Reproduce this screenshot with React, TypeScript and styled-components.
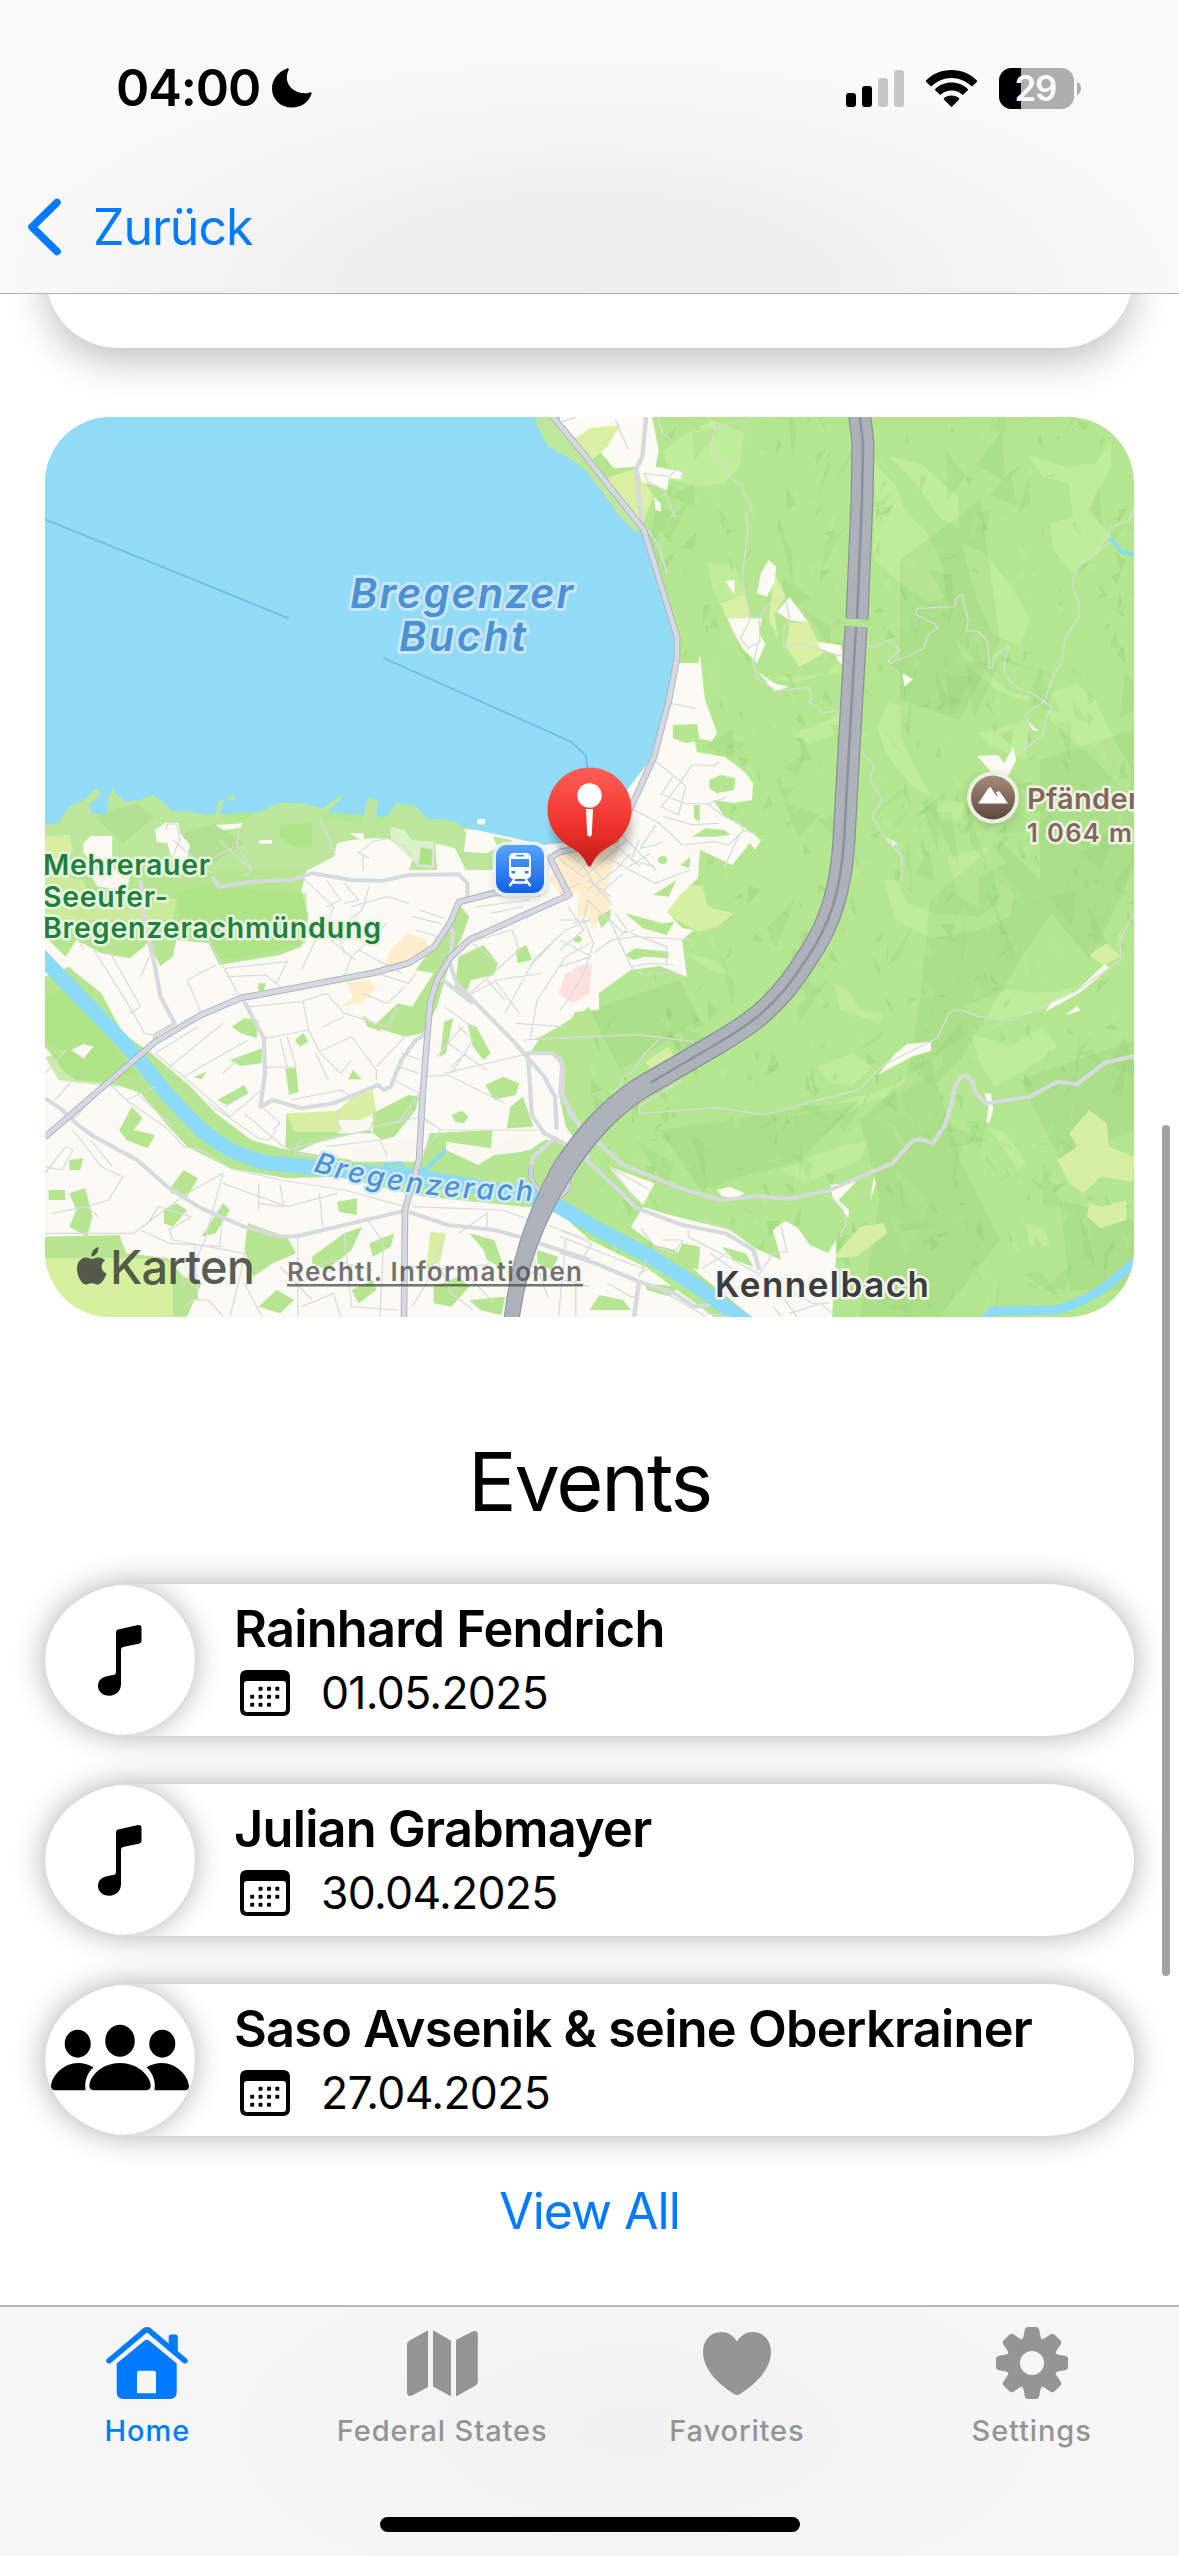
import React from "react";
import styled, { createGlobalStyle } from "styled-components";

const GlobalStyle = createGlobalStyle`
  * { box-sizing: border-box; }
  html, body { margin: 0; padding: 0; background: #fff; }
  body { font-family: Inter, "Liberation Sans", sans-serif; -webkit-font-smoothing: antialiased; }
  h2, p { margin: 0; }
`;

const Screen = styled.div`
  position: relative;
  width: 1179px;
  height: 2556px;
  display: flex;
  flex-direction: column;
  overflow: hidden;
  background: #fefefe;
  color: #000;
`;

const Header = styled.header`
  height: 294px;
  display: flex;
  flex-direction: column;
  border-bottom: 1px solid #b2b2b2;
  background: radial-gradient(ellipse 600px 240px at 50% 100%, #eeeeee 0%, #efefef 35%, #f5f5f5 75%, #f9f9f9 100%);
`;

const StatusBar = styled.div`
  height: 176px;
  padding: 0 98px 0 116px;
  display: flex;
  align-items: center;
  justify-content: space-between;
`;

const StatusGroup = styled.div<{ $gap: number }>`
  display: flex;
  align-items: center;
  gap: ${(p) => p.$gap}px;
`;

const Clock = styled.span`
  font-size: 50.5px;
  font-weight: 600;
  line-height: 60px;
  letter-spacing: -1.1px;
`;

const BackButton = styled.a`
  height: 102px;
  padding-left: 27px;
  display: flex;
  align-items: center;
  gap: 31px;
  color: #007aff;
  font-size: 50px;
  letter-spacing: -1px;
  line-height: 60px;
`;

const Content = styled.main`
  flex: 1;
  min-height: 0;
  overflow: hidden;
  padding: 0 45px;
  display: flex;
  flex-direction: column;
`;

const PeekCard = styled.section`
  flex: none;
  height: 254px;
  margin: -200px 1px 69px;
  border-radius: 72px;
  background: #fff;
  box-shadow: 0 14px 36px rgba(0, 0, 0, 0.23);
`;

const MapCard = styled.section`
  flex: none;
  height: 900px;
  border-radius: 66px;
  overflow: hidden;
  svg { display: block; }
`;

const SectionTitle = styled.h2`
  height: 267px;
  padding-top: 116px;
  text-align: center;
  font-size: 81px;
  line-height: 98px;
  font-weight: 400;
  letter-spacing: -2.2px;
  flex: none;
`;

const EventList = styled.div`
  display: flex;
  flex-direction: column;
  gap: 48px;
`;

const EventCard = styled.article`
  height: 152px;
  display: flex;
  align-items: center;
  gap: 39px;
  border-radius: 88px / 76px;
  overflow: hidden;
  background: #fff;
  box-shadow: 0 0 30px rgba(0, 0, 0, 0.33);
`;

const Disc = styled.div`
  flex: none;
  width: 150px;
  height: 150px;
  border-radius: 50%;
  background: #fff;
  box-shadow: 0 0 28px rgba(0, 0, 0, 0.31);
  svg { display: block; }
`;

const EventText = styled.div`
  display: flex;
  flex-direction: column;
  gap: 2px;
  padding-top: 2px;
`;

const EventName = styled.p`
  font-size: 50.5px;
  line-height: 62px;
  font-weight: 600;
  letter-spacing: -0.75px;
  white-space: nowrap;
`;

const EventDate = styled.p`
  display: flex;
  align-items: center;
  gap: 31px;
  padding-left: 6px;
  font-size: 44.5px;
  line-height: 62px;
  letter-spacing: -0.7px;
`;

const ViewAll = styled.a`
  margin-top: 44px;
  text-align: center;
  color: #007aff;
  font-size: 50px;
  line-height: 62px;
  letter-spacing: -1px;
`;

const ScrollThumb = styled.div`
  position: absolute;
  right: 9px;
  top: 1125px;
  width: 8px;
  height: 851px;
  border-radius: 4px;
  background: #a2a2a2;
`;

const TabBar = styled.nav`
  height: 251px;
  border-top: 2px solid #b9b9b9;
  background: radial-gradient(ellipse 420px 180px at 54% 50%, #f1f1f1 0%, #f3f3f3 50%, #f6f6f6 100%);
  display: flex;
  flex-direction: column;
  align-items: center;
  justify-content: space-between;
  padding-bottom: 24px;
`;

const Tabs = styled.div`
  width: 100%;
  display: flex;
`;

const Tab = styled.a<{ $active?: boolean }>`
  flex: 1;
  display: flex;
  flex-direction: column;
  align-items: center;
  color: ${(p) => (p.$active ? "#007aff" : "#949494")};
  font-size: 29px;
  line-height: 36px;
  font-weight: 500;
  letter-spacing: 0.9px;
`;

const TabIcon = styled.span`
  height: 106px;
  display: flex;
  align-items: center;
  svg { display: block; margin-top: 6px; }
`;

const HomeIndicator = styled.div`
  width: 420px;
  height: 15px;
  border-radius: 8px;
  background: #000;
`;

/* ---------- icons ---------- */

const MoonIcon = () => (
  <svg width="40" height="40" viewBox="0 0 40 40">
    <path d="M15 0.5C6 4 0 11.500 0 20.500C0 31.500 8.500 39.500 20 39.500C29 39.500 36.500 34.500 39.500 26C39.800 24.800 39 24 37.600 24.500C34.500 25.600 31 25.600 27.500 24.600C17 21.500 12 12 16.600 2.300C17.200 0.800 16.500 0 15 0.500Z" />
  </svg>
);

const SignalIcon = () => (
  <svg width="58" height="37" viewBox="0 0 58 37">
    <rect x="0" y="23" width="10" height="14" rx="3" />
    <rect x="16" y="16" width="10" height="21" rx="3" />
    <rect x="32" y="8" width="10" height="29" rx="3" fill="#c6c6c6" />
    <rect x="48" y="0" width="10" height="37" rx="3" fill="#c6c6c6" />
  </svg>
);

const WifiIcon = () => (
  <svg width="51" height="37" viewBox="0 0 51 37">
    <path d="M25.500 0C35.500 0 44.500 4 51 10.500C51.300 10.900 51.300 11.300 51 11.700L46.500 16C46.200 16.300 45.700 16.300 45.300 16C40 11 33 8 25.500 8C18 8 11 11 5.700 16C5.300 16.300 4.800 16.300 4.500 16L0 11.700C-0.300 11.300 -0.300 10.900 0 10.500C6.500 4 15.500 0 25.500 0Z" />
    <path d="M25.500 12.600C31.800 12.600 37.500 15 41.800 19C42.200 19.400 42.200 19.800 41.800 20.200L37.300 24.600C37 24.900 36.500 24.900 36.100 24.600C33.300 22 29.600 20.500 25.500 20.500C21.400 20.500 17.700 22 14.900 24.600C14.500 24.900 14 24.900 13.700 24.600L9.200 20.200C8.800 19.800 8.800 19.400 9.200 19C13.500 15 19.200 12.600 25.500 12.600Z" />
    <path d="M25.500 25.500C28.500 25.500 31 26.400 32.900 28C33.400 28.500 33.400 28.900 33 29.400L26.200 36.500C25.800 37 25.200 37 24.800 36.500L18 29.400C17.600 28.900 17.600 28.500 18.100 28C20 26.400 22.500 25.500 25.500 25.500Z" />
  </svg>
);

const BatteryIcon = () => (
  <svg width="82" height="41" viewBox="0 0 82 41">
    <defs>
      <clipPath id="cell"><rect width="75" height="41" rx="12.500" /></clipPath>
    </defs>
    <g clipPath="url(#cell)">
      <rect width="75" height="41" fill="#adadad" />
      <rect width="22" height="41" fill="#000" />
    </g>
    <path d="M78 14C80.500 15 82 17.500 82 20.500C82 23.500 80.500 26 78 27Z" fill="#adadad" />
    <text x="37" y="33" textAnchor="middle" fontSize="35" fontWeight="600" fill="#fafafa" textLength="43">29</text>
  </svg>
);

const ChevronIcon = () => (
  <svg width="35" height="58" viewBox="0 0 35 58">
    <path d="M30 4.500L5 29L30 53.500" fill="none" stroke="#007aff" strokeWidth="7.500" strokeLinecap="round" strokeLinejoin="round" />
  </svg>
);

const NoteIcon = () => (
  <svg width="150" height="150" viewBox="0 0 150 150">
    <path d="M71 47Q71 45 73 44.500L93 40Q96.500 39.500 96.500 43V56Q96.500 58 94 58.700L79 61.700Q76 62.300 76 65V99C76 106 71 110.700 64.500 110.700C57 110.700 53 106 53 101C53 95 57 92 63 91L68 90Q71 89.500 71 87Z" />
  </svg>
);

const PeopleIcon = () => (
  <svg width="150" height="150" viewBox="0 0 150 150">
    <ellipse cx="32.700" cy="58.700" rx="13" ry="14" />
    <ellipse cx="75" cy="55.700" rx="14.800" ry="16" />
    <ellipse cx="117.300" cy="58.700" rx="13" ry="14" />
    <path d="M10 105.300Q6 105.300 6 101C7 90 19 78 33 78C39 78 44 79.500 48.500 82.500C43 87 39 95 40.500 105.300Z" />
    <path d="M140 105.300Q144 105.300 144 101C143 90 131 78 117 78C111 78 106 79.500 101.500 82.500C107 87 111 95 109.500 105.300Z" />
    <path d="M49 105.300Q44.300 105.300 44.300 100.500C45 90 58 78 75 78C92 78 105 90 105.700 100.500Q105.700 105.300 101 105.300Z" />
  </svg>
);

const calendarDots = [
  [20.5, 18.7], [29, 18.7], [37.3, 18.7],
  [12.2, 26.8], [20.5, 26.8], [29, 26.8], [37.3, 26.8],
  [12.2, 34.8], [20.5, 34.8], [29, 34.8],
];

const CalendarIcon = () => (
  <svg width="50" height="46" viewBox="0 0 50 46">
    <path fillRule="evenodd" d="M7 0H43Q50 0 50 7V39Q50 46 43 46H7Q0 46 0 39V7Q0 0 7 0ZM7 11Q4 11 4 14V39Q4 42 7 42H43Q46 42 46 39V14Q46 11 43 11Z" />
    {calendarDots.map(([x, y]) => (
      <rect key={`${x}-${y}`} x={x - 2} y={y - 2} width="4" height="4" rx="1" />
    ))}
  </svg>
);

const HouseIcon = () => (
  <svg width="82" height="72" viewBox="0 0 82 72" fill="currentColor">
    <path d="M3 33.800L38.500 3.800Q41 2 43.500 3.800L79 33.800" fill="none" stroke="currentColor" strokeWidth="5.600" strokeLinecap="round" strokeLinejoin="round" />
    <path d="M62.700 10Q62.700 7.500 65 7.500H69.500Q71.800 7.500 71.800 10V28L62.700 20Z" />
    <path fillRule="evenodd" d="M10.700 36.500L38.700 13.500Q40.900 12 43 13.500L70.700 36.500V65Q70.700 72 64 72H17.500Q10.700 72 10.700 65ZM31 46V66.300H50V46Q50 43.700 47.700 43.700H33.300Q31 43.700 31 46Z" />
  </svg>
);

const FoldedMapIcon = () => (
  <svg width="71" height="67" viewBox="0 0 71 67" fill="currentColor">
    <path d="M0 14.500Q0 12 2.200 10.700L21 0.300V57L5.500 65.200Q0 67.500 0 62Z" />
    <path d="M26 0.300L44 10.700V66.500L26 56.500Z" />
    <path d="M49 10L65.500 1.500Q70.800 -0.300 70.800 4.500V51.500Q70.800 54 68.500 55.500L49 66.500Z" />
  </svg>
);

const HeartIcon = () => (
  <svg width="68" height="63" viewBox="0 0 68 63" fill="currentColor">
    <path d="M34 9.500C38 3.200 43 0 50 0C60.500 0 68 8.500 68 20C68 37 53 52 37 62Q34 63.800 31 62C15 52 0 37 0 20C0 8.500 7.500 0 18 0C25 0 30 3.200 34 9.500Z" />
  </svg>
);

const GearIcon = () => (
  <svg width="72" height="72" viewBox="-36 -36 72 72" fill="currentColor">
    <circle r="18.500" fill="none" stroke="currentColor" strokeWidth="13" />
    {[0, 45, 90, 135, 180, 225, 270, 315].map((a) => (
      <path key={a} transform={`rotate(${a})`} d="M-11 -22Q-9 -24 -8.300 -27L-7.300 -33Q-6.700 -36 -4 -36H4Q6.700 -36 7.300 -33L8.300 -27Q9 -24 11 -22Z" />
    ))}
  </svg>
);

/* ---------- map ---------- */

const seeded = (seed: number) => () => {
  seed = (seed * 16807) % 2147483647;
  return seed / 2147483647;
};

/* Relief shading: faint shards scattered over the wooded slopes. */
const relief = (() => {
  const rnd = seeded(4211);
  const out: { d: string; fill: string; o: number }[] = [];
  for (let i = 0; i < 1200; i++) {
    const x = 560 + rnd() * 580;
    const y = 410 + rnd() * 910;
    const s = i % 4 === 0 ? 28 : 11;
    const p = [0, 1, 2].map(() => `${(x + (rnd() - 0.5) * s * 1.5).toFixed(1)} ${(y + (rnd() - 0.5) * s * 2.2).toFixed(1)}`);
    const dark = rnd() > 0.4;
    out.push({ d: `M${p.join("L")}Z`, fill: dark ? "#7fb765" : "#c8f2a0", o: s === 28 ? 0.13 : 0.2 });
  }
  return out;
})();

/* Each sheet of the map is drawn on its own grid and placed on the canvas. */
const sheets = {
  nw: "translate(30 400) scale(.35714 .33333)",
  ne: "translate(560 400) scale(.3827 .33333)",
  sw: "translate(30 840) scale(.35714 .33333)",
  se: "translate(560 840) scale(.3948 .33333)",
};

const meadowsNe = [
  "M400 60L480 100 470 200 430 250 360 260 290 240 270 150 330 100Z",
  "M820 190L880 260 900 330 960 400 1000 500 1010 590 960 610 880 540 820 480Z",
  "M860 170L940 190 1040 290 1045 390 990 350 930 250Z",
  "M1050 430L1110 460 1180 560 1230 660 1200 740 1130 700 1090 600 1070 520Z",
  "M1225 165L1320 200 1400 190 1440 120 1440 200 1380 330 1450 420 1340 520 1290 450 1280 370 1340 350 1330 250 1260 230Z",
  "M860 900L890 920 890 1010 930 1110 970 1190 920 1160 850 1060 830 980Z",
  "M1280 880L1350 850 1400 900 1440 1000 1490 1100 1490 1190 1380 1060 1280 960Z",
  "M610 1000L700 960 735 930 735 1000 650 1030Z",
  "M1030 710L1090 790 1180 880 1240 890 1230 910 1140 870 1060 790Z",
  "M520 820L610 850 700 820 730 780 735 820 560 830Z",
  "M385 490L455 490 500 650 430 640 400 570Z",
  "M1090 1000L1220 960 1220 1080 1130 1040Z",
  "M970 1200L1060 1210 1040 1270 1000 1260Z",
];
const meadowsSe = [
  "M850 120L880 190 950 220 1060 230 1110 190 1115 130 1150 160 1140 230 1060 270 940 295 850 240 820 120Z",
  "M980 50L1100 20 1130 70 1060 110 1060 200 1010 170Z",
  "M695 430L730 450 760 510 820 520 810 550 710 510Z",
  "M650 680L740 640 790 680 740 740 680 730Z",
  "M1020 500L1130 450 1230 460 1310 440 1230 510 1120 540 1050 530Z",
  "M1040 580L1140 620 1220 560 1260 620 1180 690 1100 740 1060 660Z",
  "M570 830L700 790 840 740 970 640 970 680 860 760 740 800Z",
  "M1080 860L1130 880 1180 970 1160 990 1110 900Z",
  "M1180 1150L1230 1170 1240 1220 1190 1220Z",
  "M560 990L680 930 780 900 760 960 620 1030Z",
  "M320 340L390 360 440 410 380 390Z",
];
const fieldsNe = [
  "M60 130L90 60 160 55 110 140 80 160Z",
  "M120 235L200 205 245 290 215 370 150 280Z",
  "M420 610L480 585 500 655 435 655Z",
  "M560 520L590 590 560 640 570 715 545 660Z",
  "M600 668L650 668 690 760 625 800 590 740Z",
];
const fieldsSe = [
  "M270 140L360 135 375 200 440 220 400 260 350 275 265 220Z",
  "M215 665L275 620 290 650 230 690Z",
  "M1340 345L1385 310 1420 350 1375 375Z",
  "M1340 810L1385 850 1390 920 1455 950 1450 1025 1370 1010 1325 1060 1290 1030 1260 960 1310 920 1290 880Z",
  "M1340 1090L1375 1100 1435 1080 1435 1140 1370 1165 1335 1130Z",
  "M690 1255L760 1160 820 1150 830 1180 750 1250Z",
];
const clearingsNe = [
  "M0 50H240L258 150 250 200 320 215 320 238 285 235 280 270 215 245 200 200 140 205 105 155 60 130 0 80Z",
  "M245 290L262 310 265 335 250 330Z",
  "M545 480L565 500 560 550 540 590 515 580 525 520Z",
  "M432 542L456 540 456 585Z",
  "M437 655H527L520 700 537 730 515 790 480 750 455 700Z",
  "M565 635L600 592 650 668 600 660Z",
  "M670 725L735 735 738 795 725 780 720 765 680 745Z",
  "M518 815L560 850 598 860 560 875Z",
  "M895 820L922 838 900 860Z",
  "M1090 1068L1145 1065 1160 1090 1185 1040 1192 1080 1170 1130 1130 1120Z",
  "M845 1308L882 1328 870 1342Z",
  "M1222 962L1252 995 1235 990Z",
];
const clearingsSe = [
  "M805 705L850 640 880 612 940 605 940 632 890 650Z",
  "M1230 515L1245 485 1310 450 1380 372 1392 385 1320 455Z",
  "M1280 525L1310 497 1318 512Z",
  "M1075 760L1092 760 1097 810 1088 850 1080 845 1085 800Z",
  "M125 980L240 1030 210 1095 150 1020Z",
  "M397 1050L430 1040 468 1060 440 1075 410 1068Z",
  "M685 1035L750 1025 705 1080 732 1110 730 1135 690 1070Z",
  "M795 1010L800 1030 785 1085Z",
];

const greensSw = [
  "M42 0H860L840 50 775 90 760 150 780 230 760 320 700 345 530 375 500 310 410 300 400 350 365 378 330 310 280 355 200 340 130 300 100 350 42 290Z",
  "M42 410L110 380 130 400 200 460 260 580 340 640 450 740 520 820 620 900 720 930 900 960 1100 950 1120 880 1295 870 1290 940 1400 930 1440 900 1480 900 1568 950V1130L1440 1100 1380 1100 1200 1080 1100 1070 860 1010 720 1015 560 985 440 920 380 850 310 760 230 730 130 720 100 700 42 620Z",
  "M1170 260L1200 190 1230 230 1210 290 1180 350 1140 500 1100 580 1050 590 960 560 1030 490 1070 500 1130 400 1080 390Z",
  "M1200 350L1270 315 1310 370 1300 405 1235 420 1220 465 1190 440Z",
  "M1360 330L1390 315 1405 360 1365 370Z",
  "M1160 545L1185 535 1165 640 1148 650Z",
  "M1225 550L1250 560 1290 640 1270 660 1240 620Z",
  "M1275 735L1325 710 1370 730 1360 765 1300 780Z",
  "M1180 825L1210 812 1228 830 1215 850 1190 845Z",
  "M565 560L600 535 640 540 635 595 590 580Z",
  "M560 660L650 625 648 670 590 678Z",
  "M715 685L745 683 752 755 725 765Z",
  "M742 600L765 578 780 605 755 620Z",
  "M525 780L600 735 612 760 550 795Z",
  "M718 820L860 870 860 880 960 880 960 820 1060 765 1090 770 1080 810 1020 890 985 900 950 870 800 910 740 940 715 920Z",
  "M250 870L285 800 315 835 290 870 350 885 330 925 270 900Z",
  "M395 1040L430 990 470 1015 440 1070 395 1060Z",
  "M375 1110L410 1090 440 1110 400 1160 375 1150Z",
  "M52 1050L98 1050 98 1080 52 1080Z",
  "M110 960L150 955 140 990 110 990Z",
  "M110 1060L155 1045 175 1130 160 1190 110 1160 130 1110Z",
  "M42 1190L250 1185 270 1240 385 1255 430 1310 480 1330 440 1430H42Z",
  "M480 1190L540 1090 560 1110 520 1180Z",
  "M610 1150L720 1190 745 1240 680 1270 625 1310 600 1230Z",
  "M790 1250L880 1180 930 1160 900 1230 830 1290 790 1270Z",
  "M860 1085L915 1075 915 1125 865 1115Z",
  "M640 1400L690 1350 740 1380 700 1420Z",
  "M900 1350L960 1320 970 1350 920 1390Z",
  "M950 1210L1020 1180 1010 1220 960 1250Z",
  "M1130 1340L1200 1310 1230 1340 1180 1400 1130 1390Z",
  "M1230 1180L1300 1200 1330 1290 1280 1260 1270 1230Z",
  "M1230 1380L1330 1370 1320 1425 1260 1410Z",
  "M640 430L660 430 655 455 638 450Z",
  "M1345 800L1380 770 1410 860 1335 865Z",
  "M1480 560L1568 500V960L1500 860 1480 760 1495 680 1470 640 1400 640 1430 590Z",
  "M400 1380L400 1350 470 1350 470 1380Z",
  "M1420 1230L1480 1250 1460 1290 1420 1270Z",
  "M930 525L975 560 985 575 945 560Z",
  "M905 690L930 718 890 718Z",
  "M458 712L495 695 480 718Z",
];

const smallStreets: Record<keyof typeof sheets, string> = {
  nw: "M380 1290L385 1272 410 1272 420 1320 395 1380M585 1285L580 1335 620 1410M575 1340L510 1375M812 1255L855 1365M920 1360L960 1325 1000 1315 1050 1340 1070 1370M915 1355L950 1375M932 1365L932 1410M1490 65L1530 50",
  ne: "M255 55L268 100 292 122M145 60L178 148M220 220L285 230 302 210 320 215 315 235M220 220L230 245 272 270 300 350 313 350M388 50L405 90 395 130 395 160 440 205 440 228 476 255 478 280 502 317 485 345 492 378 475 540 498 655 472 715 492 745 523 725 520 660 540 615 588 588 600 655 585 690 585 745 620 728 740 770M520 720L505 790 515 835 565 872 650 862 658 895 650 905 688 938 735 932M405 90L460 62 490 65M802 738L825 738 858 720 887 750 857 782 862 792 948 747 965 700 988 685 980 672 927 643 935 625 1030 620 1038 590 1050 583 1067 660 1062 692 1095 695 1117 725 1122 803 1130 803 1137 768 1172 738 1160 800 1165 830 1200 868 1235 880 1285 922 1270 950 1263 1003 1215 1047 1225 970 1215 943 1265 905 1290 825 1313 780 1320 715 1353 655 1357 615 1338 553 1355 497 1402 458 1438 383 1490 358 1500 325M785 1055L820 1095 810 1140 842 1198 815 1250 845 1308 880 1335 893 1370V1410M290 910L354 925M250 1083L315 1145 345 1095 405 1097 415 1085M315 1145L328 1160 310 1245 265 1220 320 1140M295 1130L265 1182 325 1210 385 1212 435 1253 470 1270 480 1292 440 1335 405 1325 320 1335 260 1270 190 1228M385 1212L435 1192M270 1250L345 1274 415 1270M250 1275L210 1345 250 1335 265 1328M150 1290L250 1410M120 1310L210 1400M480 1292L515 1300M470 1300L430 1400M235 1360L180 1400",
  sw: "M530 0L620 90 600 110M510 100L400 0M180 330L290 520 320 580 345 585M220 330L310 500 280 520M350 310L310 410M500 300L590 475M545 385L720 365 690 430M550 410L660 405 700 440M440 420L520 375M440 420L480 520M610 500L760 485 830 460 880 520M765 485L780 570 660 595M700 595L720 680M720 590L745 680 660 682M780 570L810 635 900 590 970 690 970 720M800 640L835 720M810 635L870 700 900 660M880 520L1000 560 1030 500M880 530L820 560M970 400L1060 430 1080 400M930 460L1000 490 1050 440M1050 590L970 680M1040 640L1095 660M1030 680L1090 700M1020 720L1090 760 1030 850M350 640L430 710 610 600M430 710L560 830 660 740M380 690L540 550M350 640L470 560M540 700L590 650M545 800L610 760M600 820L720 930 860 890 950 870 970 820M650 800L700 850 680 870M500 790L640 895 670 900 690 870M730 780L870 750 900 770M860 810L865 880M960 860L1100 830 1150 870 1420 870M1095 830L1150 870 1090 950M1100 710L1170 705 1330 790M1160 700L1400 640M1170 610L1280 690M1140 650L1210 560M1200 560L1240 600 1180 700M1220 640L1180 680M1160 500L1250 570M1220 470L1310 420 1430 400M1280 420L1330 480M1300 420L1370 520M1400 380L1470 300M1330 520L1410 360 1500 270 1568 240M1400 600L1420 480 1500 350 1568 310M1360 550L1490 560M1380 600L1568 590M1250 300L1350 270 1370 330 1220 470M1240 310L1310 370M1070 230L1150 250M1090 210L1160 235M1080 270L1140 290M1250 200L1400 180M1290 220L1380 200M1520 250L1568 240M760 110L850 200 830 260 800 300M830 120L870 180 830 200M880 130L920 180 880 190M950 140L930 210 860 270 880 340M1000 250L900 350 880 410M900 200L1000 170 1060 190M920 330L1040 400M820 280L910 360M800 300L760 390M42 700L100 630M70 780L120 720M120 840L180 770M220 730L270 780 350 740M270 780L390 870 430 920 480 930 560 985 700 1020 880 1050 1050 1100M300 760L400 860M120 870L200 980 260 1010 220 1080 160 1100 60 1120M160 1100L190 1130M170 900L230 980M42 1000L100 920 120 930 90 990 40 980M42 1180H290L440 1060 540 1000 490 1200 430 1340M290 1180L330 1150 360 1100 450 1130 390 1170 400 1200 600 1240M310 1170L390 1210 540 1220M640 1030V1110M700 1035L710 1100 640 1090M810 1060L820 1160M540 1030L720 1100 860 1060M750 1190V1430M940 1130L990 1210 980 1430M770 1290L850 1260 960 1290M600 1240L590 1300 560 1430M460 1210L470 1380M540 1130L530 1220M600 1330L650 1430M700 1280L790 1380M760 1400L850 1360 870 1430M880 1180L900 1400 1030 1410M1070 1100L1320 1110 1568 1200M1160 1190L1110 1330 1070 1400M1070 1280L1200 1290 1290 1270M1200 1180L1280 1120 1280 1160M1140 1260L1180 1360 1240 1410M1220 1300L1300 1390M1400 1230L1450 1370M1500 1200L1480 1430M1380 1290L1568 1340M750 910L740 940 860 960M740 930L760 900M830 920L980 900 1000 950M440 1400L450 1380 500 1380 540 1430M1070 810L1040 850M120 260L150 330",
  se: "M0 20L60 80 90 140 130 190M20 0L110 120M0 60L60 110 170 0M40 100L80 60M70 150L140 90 180 40M90 170L160 100M70 120L130 170M130 60L240 130 330 90M200 0L180 60 240 80M0 160L50 130M0 240L60 240 85 310 60 400 20 480 0 510M60 240L70 180 130 250 180 380 210 405 290 395 300 410M85 340L130 300 190 290 340 300M180 280L270 320 270 370M180 380L230 370 290 375M0 330L60 270 20 200M0 300L80 350 0 380M140 220L170 270 150 290M120 230L160 280 190 270M0 595L190 583 340 605M255 595L215 640 180 700 160 710 150 745 130 760M310 720L200 800 202 820 400 803 520 825 620 790 740 755 760 745 820 675 870 645 955 595 985 520 1000 510 1020 512 1060 530 1140 542 1240 490 1300 460 1420 360 1418 300 1455 215M830 0L866 50V120M675 1065L715 1100 725 1150 710 1190M130 985L225 1048M130 980L190 1080M205 1165L240 1220 290 1240 310 1200 260 1200M325 1170L325 1190 390 1230 500 1300M360 1140L430 1170M325 1190L380 1225M360 1285L430 1235M380 1240L440 1290 440 1320M0 1170L80 1210 60 1250M0 1190L220 1290 200 1300M220 1260L200 1310M120 1330L180 1370 200 1370M40 1320V1430M240 1340L370 1430M370 1420L430 1430M500 1310L540 1240 575 1235 560 1160M545 1330L640 1390 680 1390M570 1380L600 1430M580 1420L660 1390 690 1420M540 1400L560 1430",
};

const collectors: Record<keyof typeof sheets, string> = {
  nw: "",
  ne: "M225 50L215 170 200 205 213 370",
  sw: "M510 110L530 140 620 125 730 120 790 100 900 120 990 122 1060 105 1200 103 1225 130V180M310 120L320 240 350 380 365 470 405 550 350 585V610M600 485L655 595 658 700 645 800 680 780 760 805 850 790 975 735 990 750 1010 740 1040 660 1080 600 1110 580M1175 255L1185 280 1175 370 1195 430 1350 600 1440 710 1470 770 1475 870M1150 415L1240 490M1385 650L1395 640H1465L1490 670 1485 760 1540 860 1568 900M1395 650L1405 825 1440 880 1568 950M1475 890L1410 950 1400 990M42 775L85 805 140 860 180 890 300 960 390 1045 480 1105 600 1160 700 1190 750 1188 900 1150 1050 1112 1170 1155 1300 1170 1370 1190 1568 1260",
  se: "M0 650L8 690 5 760 30 830 80 890 160 975 200 995 320 1050 405 1080 500 1068 580 1077 680 1052 800 990 840 972 895 900 915 898 945 910 975 855 990 800 1000 740 1015 710 1030 706 1045 725 1052 760 1080 790 1190 770 1260 725 1310 733 1380 668 1455 648M0 905L50 940 130 1030 195 1105 310 1155 420 1180 490 1230 505 1290M0 1235L90 1270 200 1325 290 1360 340 1400 380 1395M200 1325L188 1430",
};

const primaryRoads = [
  "M553 417L583 453L644 530L677 637V658L669 700L654 757L633 803L615 840L560 852L550 858L569 895L469 940L450 958L437 980L430 1003L423 1090L419 1160L405 1210L404 1317",
  "M45 1137L155 1042L201 1015L241 998L373 973L409 963L434 947L450 923L459 902L494 893H540",
];
const motorwayTop = "M859 410L863 443L862 500L857 619";
const motorwayMid = "M856 627L848 767L844 840C841 890 830 925 807 958C775 1010 745 1027 718 1043L639 1089C605 1112 585 1137 566 1165";
const motorwayMedian = "M856 627L848 767L844 840C841 890 830 925 807 958C775 1010 745 1027 718 1043L650 1083";
const motorwayLow = "M557.500 1158C530 1205 510 1260 504 1325H518C524 1270 545 1215 575 1171Z";
const river = "M30 945L109 1027L137 1057L166 1093L201 1130L230 1150L262 1162L316 1168L416 1177L530 1195L560 1207L599 1230L651 1257L698 1287L750 1325";

const labelHalo = { paintOrder: "stroke", strokeLinejoin: "round" } as const;

const AreaMap = () => (
  <svg width="1089" height="900" viewBox="45 417 1089 900">
    <defs>
      <linearGradient id="pinFill" x1="0" y1="0" x2="0" y2="1">
        <stop offset="0" stopColor="#ff5f57" />
        <stop offset="0.550" stopColor="#f2352e" />
        <stop offset="1" stopColor="#c01d18" />
      </linearGradient>
      <linearGradient id="railFill" x1="0" y1="0" x2="0" y2="1">
        <stop offset="0" stopColor="#57a4ff" />
        <stop offset="1" stopColor="#135fe6" />
      </linearGradient>
      <linearGradient id="peakFill" x1="0" y1="0" x2="0" y2="1">
        <stop offset="0" stopColor="#a68b7b" />
        <stop offset="1" stopColor="#5d483d" />
      </linearGradient>
      <filter id="soft" x="-50%" y="-50%" width="200%" height="200%"><feGaussianBlur stdDeviation="5" /></filter>
      <path id="riverLabel" d="M313 1171C360 1186 430 1201 560 1201" />
    </defs>

    <rect x="45" y="417" width="1089" height="900" fill="#b3e68f" />
    <g transform={sheets.ne} fill="#c2ef9a" opacity="0.800">{meadowsNe.map((d) => <path key={d} d={d} />)}</g>
    <g transform={sheets.se} fill="#c2ef9a" opacity="0.750">{meadowsSe.map((d) => <path key={d} d={d} />)}</g>
    <g fill="#8fc774" opacity="0.220">
      <path d="M930 900L1000 840L1060 900L1020 960L960 1060L900 1120L920 1000Z" />
      <path d="M1040 760L1134 730V870L1090 960L1040 900Z" />
      <path d="M860 1120L930 1060L960 1160L1000 1240L940 1317H860L880 1200Z" />
      <path d="M1020 1080L1134 1040V1130L1060 1160Z" />
      <path d="M660 1130L860 1100L800 1160L700 1190Z" />
      <path d="M1060 1200L1134 1220V1290L1070 1290Z" />
      <path d="M900 560L980 500L1000 640L960 720L900 700Z" />
      <path d="M590 1010L680 980L700 1020L620 1070Z" />
    </g>
    <g>{relief.map((r, i) => <path key={i} d={r.d} fill={r.fill} opacity={r.o} />)}</g>
    <g transform={sheets.ne} fill="#d9f0a2">{fieldsNe.map((d) => <path key={d} d={d} />)}</g>
    <g transform={sheets.se} fill="#d6ee9f">{fieldsSe.map((d) => <path key={d} d={d} />)}</g>
    <g transform={sheets.ne} fill="#fbfaf3">{clearingsNe.map((d) => <path key={d} d={d} />)}</g>
    <g transform={sheets.se} fill="#fbfaf3">{clearingsSe.map((d) => <path key={d} d={d} />)}</g>
    <path d="M562 448L590 428L620 425L608 446L592 460L575 458Z" fill="#d9f0a2" />

    {/* town */}
    <path fill="#fbf9f3" d="M45 823L500 830L629 787L656 753L677 663H698L700 655L705 700L717 733L712 741L694 738L697 752L725 757L745 772L753 783L752 800L735 803L713 800L725 817L745 828L761 840L755 850L750 843L732 865L722 860L700 850L698 878L680 895L667 912L682 928L694 930L682 940L687 977L660 966L631 970L599 993V1010L575 1012L566 1030L530 1040L566 1040V1110L580 1140L545 1200L590 1240L647 1268L714 1317H45Z" />
    <path fill="#fbf9f3" d="M631 1227L643 1207L670 1215L730 1230L755 1248L781 1260L773 1230L785 1221L797 1227L810 1245L828 1253L836 1240V1255L832 1317H752L700 1275L675 1250L655 1245Z" />
    <path fill="#fdedcb" d="M560 850L600 845L625 790L633 800L618 850L606 890L612 905L592 930L586 915L577 918L580 890L565 900L550 880Z" />
    <g transform={sheets.sw}>
      <g fill="#b6e592">{greensSw.map((d) => <path key={d} d={d} />)}</g>
      <g fill="#a9e37f" opacity="0.600">
        <path d="M410 160L520 130 620 150 775 160 770 310 600 350 530 360 500 300 420 250Z" />
        <path d="M42 650L130 640 250 740 150 730 80 720Z" />
        <path d="M42 470L100 440 190 540 250 640 300 700 240 720 100 640 42 600Z" />
      </g>
      <g fill="#d8efa1">
        <path d="M718 820L860 812 905 770 960 750 970 815 865 875 740 875Z" />
        <path d="M42 1255H300L400 1265V1430H42Z" opacity="0.900" />
        <path d="M1120 1175L1165 1180 1150 1260 1110 1290Z" />
        <path d="M42 100L150 120 170 200 410 175 400 240 42 240Z" opacity="0.600" />
      </g>
      <g fill="#f9f7f0">
        <path d="M860 840H960V860L880 880Z" />
        <path d="M155 80L230 75 280 110 270 150 190 140Z" />
        <path d="M115 630L150 612 178 620 150 655Z" />
        <path d="M900 930L1000 905 1080 900 1085 965H900Z" />
        <path d="M1165 905L1290 925 1380 880 1382 935 1300 945 1255 975 1165 930Z" />
      </g>
      <g fill="#fdedcb">
        <path d="M1010 330L1060 280 1110 300 1115 330 1060 365 990 380Z" />
        <path d="M885 430L950 420 968 445 930 490 870 500 905 470Z" />
      </g>
      <path fill="#fde0dd" d="M1480 460L1500 400 1568 370V460L1520 490Z" />
    </g>
    <path fill="#fde0dd" d="M560 990L575 967L592 963L590 985L575 1000Z" />
    <g transform={sheets.se} fill="#b6e592">
      <path d="M95 230L130 208 125 240 105 265Z" />
      <path d="M165 220L260 250 290 245 270 285 210 265Z" />
      <path d="M165 345L190 325 275 335 275 355 215 350 185 360Z" />
      <path d="M235 165L295 120 275 170Z" />
      <circle cx="260" cy="60" r="12" /><circle cx="45" cy="298" r="10" />
      <path d="M305 75L330 50 328 85Z" />
      <path d="M290 1260L310 1210 355 1220 350 1290Z" />
      <path d="M410 1220L470 1240 490 1280 440 1260Z" />
      <path d="M75 1410L100 1365 160 1380 180 1410Z" />
      <path d="M215 1330L300 1340 280 1370 220 1350Z" />
    </g>
    <g transform={sheets.ne} fill="#b6e592">
      <path d="M295 975L358 972 365 1020 330 1030 295 1015Z" />
      <path d="M390 1140L420 1125 458 1135 455 1170 410 1180 390 1165Z" />
      <path d="M345 1310L380 1285 430 1290 445 1305 400 1310Z" />
      <path d="M350 1215H365V1265L350 1255Z" />
    </g>

    {/* lake */}
    <path fill="#92dbf7" d="M45 417H538L540 430L552 447L566 455L594 477L621 517L642 533L675 637V663L667 700L652 757L629 787L617 810L590 840L544 845L509 837L462 827L400 818L300 810L200 815L45 826Z" />
    <path fill="#bce79d" d="M534 417H553L583 453L644 530L636 532L620 517L605 495L583 467L566 456L549 447L540 432Z" />
    <g transform={sheets.nw}>
      <path fill="#bbe69b" d="M42 1275L80 1268 110 1220 150 1200 185 1165 200 1182 165 1215 175 1240 215 1245 220 1190 235 1158 240 1182 270 1205 310 1200 345 1185 382 1215 400 1235 450 1235 518 1250 528 1205 570 1185 575 1200 545 1198 530 1240 548 1268 600 1265 620 1245 700 1208 760 1210 820 1225 872 1185 876 1192 820 1250 930 1270 945 1195 975 1200 965 1280 1010 1235 1025 1210 1080 1218 1110 1255 1190 1262 1220 1295 1350 1320 1300 1410H42Z" />
      <path fill="#aae381" d="M700 1275L790 1270V1340H740L700 1310Z" opacity="0.800" />
      <g fill="#a5d885" opacity="0.400"><path d="M180 1250L300 1210 350 1250 260 1330Z" /><path d="M430 1300L520 1270 600 1330 480 1410H420Z" /></g>
      <path fill="#d8efa1" d="M42 1310L110 1305 120 1350 90 1400H42Z" />
      <g fill="#fbf9f3">
        <path d="M350 1290L380 1268H415L420 1300 448 1335 440 1380 400 1390 385 1330 355 1325Z" />
        <path d="M150 1330L170 1308H230V1375L190 1400 150 1360Z" />
        <path d="M520 1275L595 1270 590 1283 540 1290Z" /><path d="M642 1320H678V1331H642Z" />
        <path d="M860 1330L900 1320 960 1315H1000L1060 1340 1075 1370 1060 1410H780L850 1370Z" />
        <path d="M1222 1290L1290 1300 1310 1340 1280 1360 1215 1355Z" /><path d="M1252 1257H1274V1273H1252Z" />
        <path d="M1135 1330L1190 1345 1220 1410H1140Z" /><path d="M895 1300L935 1300V1325Z" />
      </g>
      <path fill="#d8f3c6" d="M1010 1280L1050 1290 1070 1320 1130 1325 1130 1390 1080 1390 1010 1320Z" />
      <path fill="#aae381" stroke="#dfe1e2" strokeWidth="7" d="M1092 1340L1130 1345 1128 1400 1085 1395Z" />
      <g fill="none" stroke="#6dbde7" strokeWidth="5.500">
        <path d="M42 358L724 655" /><path d="M990 774L1515 1025 1556 1066 1562 1120" />
      </g>
    </g>

    {/* rivers */}
    <g fill="none" stroke="#8adaf8" strokeLinejoin="round">
      <path d={river} strokeWidth="15" />
      <path d="M384 1165L400 1163L410 1174L425 1170L446 1150" strokeWidth="4" />
      <path d="M986 1319L993 1311L1055 1310C1085 1304 1110 1285 1134 1262" strokeWidth="9" />
      <path d="M1110 538L1123 553L1134 554" strokeWidth="4" />
      <path d="M618 1191L638 1210" strokeWidth="3" />
    </g>

    {/* streets */}
    {(Object.keys(sheets) as (keyof typeof sheets)[]).map((k) => (
      <g key={k} transform={sheets[k]} fill="none" strokeLinejoin="round">
        <path d={smallStreets[k]} stroke="#d9dadd" strokeWidth="3.600" />
        <path d={collectors[k]} stroke="#d6dadd" strokeWidth="12" />
      </g>
    ))}
    <path d="M646 527L659 547L667 573" fill="none" stroke="#d6dadd" strokeWidth="2" />
    <g fill="none" strokeLinejoin="round">
      {primaryRoads.map((d) => <path key={d} d={d} stroke="#acb0bc" strokeWidth="6.600" />)}
      {primaryRoads.map((d) => <path key={d} d={d} stroke="#d5d8e0" strokeWidth="4.800" />)}
      <path d="M532 1165Q528 1175 535 1185L548 1200L560 1197Q572 1188 568 1178L555 1175" stroke="#aeb1ba" strokeWidth="5" />
      <path d="M532 1165Q528 1175 535 1185L548 1200L560 1197Q572 1188 568 1178L555 1175" stroke="#d0d3d8" strokeWidth="3.500" />
      <path d={motorwayLow} fill="#8b909b" stroke="#8b909b" strokeWidth="2" />
      <path d={motorwayMid} stroke="#8b909b" strokeWidth="23" />
      <path d={motorwayTop} stroke="#8b909b" strokeWidth="23" />
      <path d={motorwayLow} fill="#adb1ba" />
      <path d={motorwayMid} stroke="#adb1ba" strokeWidth="20.500" />
      <path d={motorwayTop} stroke="#adb1ba" strokeWidth="20.500" />
      <path d={motorwayMedian} stroke="#8d929c" strokeWidth="2.600" />
      <path d={motorwayTop} stroke="#8d929c" strokeWidth="2.600" />
    </g>

    {/* labels */}
    <g style={labelHalo} fontWeight="600">
      <g fill="#4a92d4" stroke="#c8e6f5" strokeWidth="6" fontStyle="italic" fontSize="41.500">
        <text x="350" y="608" textLength="223">Bregenzer</text>
        <text x="399" y="651" textLength="127">Bucht</text>
      </g>
      <g fill="#20813d" stroke="#e9f4e1" strokeWidth="5" fontSize="28.500">
        <text x="43" y="875" textLength="167">Mehrerauer</text>
        <text x="43" y="906.500" textLength="125">Seeufer-</text>
        <text x="43" y="937.500" textLength="338">Bregenzerachmündung</text>
      </g>
      <text fill="#4a92d4" stroke="#d3eaf3" strokeWidth="5" fontSize="28.500" fontWeight="500" fontStyle="italic" letterSpacing="2.900">
        <textPath href="#riverLabel">Bregenzerach</textPath>
      </text>
      <g fill="#80675a" stroke="#eef3e4" strokeWidth="5">
        <text x="1027" y="809" fontSize="29" letterSpacing="0.300">Pfänder</text>
        <text x="1027" y="842" fontSize="25.500" textLength="105">1 064 m</text>
      </g>
      <text x="715" y="1297" fill="#3d3d3d" stroke="#f7f7f4" strokeWidth="5" fontSize="35" textLength="214">Kennelbach</text>
    </g>

    {/* markers */}
    <circle cx="993" cy="800" r="26" fill="#333" opacity="0.200" filter="url(#soft)" />
    <circle cx="993" cy="797.500" r="26" fill="#e9f0dc" />
    <circle cx="993" cy="797.500" r="22" fill="url(#peakFill)" />
    <path fill="#fff" d="M978 803.500L989 787.500Q990 786.500 991 787.500L995 794L998 797L996 792L998 791.500Q999 791 1000 792L1008 803.500Z" />
    <rect x="497" y="848" width="48" height="49" rx="11" fill="#333" opacity="0.300" filter="url(#soft)" />
    <rect x="492.500" y="841.500" width="55" height="55" rx="14" fill="#e8f3fa" opacity="0.850" />
    <rect x="496" y="845" width="48" height="48" rx="11" fill="url(#railFill)" />
    <path fill="#fff" fillRule="evenodd" d="M513 853H527Q531 854 531 858V874Q531 878 527 879H513Q509 878 509 874V858Q509 854 513 853ZM511 859V867H529V859ZM516 854.800V856.500H524V854.800ZM511.500 871V873.500H515V871ZM525 871V873.500H528.500V871Z" />
    <path d="M514.500 879L509.500 886M525.500 879L530.500 886M512 882.500H528" stroke="#fff" strokeWidth="2.300" fill="none" />
    <ellipse cx="592" cy="826" rx="40" ry="38" fill="#222" opacity="0.300" filter="url(#soft)" />
    <path fill="url(#pinFill)" d="M589.500 767.500C612.500 767.500 631.500 786 631.500 809.500C631.500 826 622 840 607 848C598 853 594.500 859 591.500 865Q589.500 868.500 587.500 865C584.500 859 581 853 572 848C557 840 547.500 826 547.500 809.500C547.500 786 566.500 767.500 589.500 767.500Z" />
    <circle cx="589.500" cy="795.500" r="12.200" fill="#fff" />
    <path fill="#fff" d="M586 809H593L591.800 835Q589.500 838.500 587.200 835Z" />

    {/* attribution */}
    <g fill="#3c3f3a" fillOpacity="0.850">
      <path transform="translate(77 1247)" d="M21.500 0C21.800 5 18.500 9 14.500 9.500C14 5 17.500 1 21.500 0ZM28 13.500C23 16.500 23.500 24 29.500 26.500C28 31.500 24.500 37 21 37.500C18.500 37.700 17.500 36.300 14.800 36.300C12 36.300 10.800 37.700 8.700 37.500C4.500 37 0 29 0 22C0 14.500 4.500 10.500 9 10.500C11.500 10.500 13.500 12 15 12C16.500 12 19 10.200 22 10.400C24.500 10.600 26.500 11.500 28 13.500Z" />
      <text x="110" y="1284" fontSize="47" fontWeight="500" textLength="145">Karten</text>
    </g>
    <g fill="#4d4d4d" fillOpacity="0.780">
      <text x="287" y="1281" fontSize="26" fontWeight="600" textLength="295">Rechtl. Informationen</text>
      <rect x="287" y="1284" width="296" height="2.500" />
    </g>
  </svg>
);

/* ---------- data ---------- */

const events = [
  { name: "Rainhard Fendrich", date: "01.05.2025", icon: <NoteIcon /> },
  { name: "Julian Grabmayer", date: "30.04.2025", icon: <NoteIcon /> },
  { name: "Saso Avsenik & seine Oberkrainer", date: "27.04.2025", icon: <PeopleIcon /> },
];

const tabs = [
  { label: "Home", icon: <HouseIcon />, active: true },
  { label: "Federal States", icon: <FoldedMapIcon /> },
  { label: "Favorites", icon: <HeartIcon /> },
  { label: "Settings", icon: <GearIcon /> },
];

export default function App() {
  return (
    <>
      <GlobalStyle />
      <Screen>
        <Header>
          <StatusBar>
            <StatusGroup $gap={12}>
              <Clock>04:00</Clock>
              <MoonIcon />
            </StatusGroup>
            <StatusGroup $gap={22}>
              <SignalIcon />
              <WifiIcon />
              <BatteryIcon />
            </StatusGroup>
          </StatusBar>
          <BackButton>
            <ChevronIcon />
            Zurück
          </BackButton>
        </Header>
        <Content>
          <PeekCard />
          <MapCard>
            <AreaMap />
          </MapCard>
          <SectionTitle>Events</SectionTitle>
          <EventList>
            {events.map((e) => (
              <EventCard key={e.name}>
                <Disc>{e.icon}</Disc>
                <EventText>
                  <EventName>{e.name}</EventName>
                  <EventDate>
                    <CalendarIcon />
                    {e.date}
                  </EventDate>
                </EventText>
              </EventCard>
            ))}
          </EventList>
          <ViewAll>View All</ViewAll>
        </Content>
        <TabBar>
          <Tabs>
            {tabs.map((t) => (
              <Tab key={t.label} $active={t.active}>
                <TabIcon>{t.icon}</TabIcon>
                {t.label}
              </Tab>
            ))}
          </Tabs>
          <HomeIndicator />
        </TabBar>
        <ScrollThumb />
      </Screen>
    </>
  );
}
